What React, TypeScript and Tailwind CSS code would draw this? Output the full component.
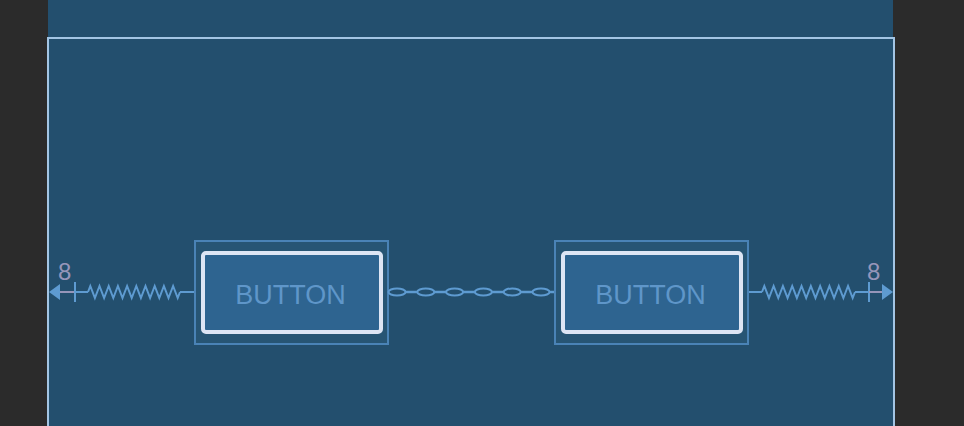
const LINE = '#5e9bd1';
const MUTED = '#9696ba';

function zigzag(x0: number, x1: number, teeth: number, y: number) {
  const step = (x1 - x0) / teeth;
  let d = `M${x0} ${y}`;
  for (let i = 0; i < teeth; i++) {
    const s = x0 + step * i;
    d += ` L${s + step * 0.25} ${y - 6} L${s + step * 0.75} ${y + 6} L${s + step} ${y}`;
  }
  return d;
}

function LeftConstraint() {
  return (
    <svg width="145" height="105" className="shrink-0 overflow-visible">
      <text x="9" y="40" fill={MUTED} fontSize="24" fontFamily="'Liberation Sans', Arial, sans-serif">8</text>
      <polygon points="0,52 11,44 11,60" fill={LINE} />
      <line x1="11" y1="52" x2="26" y2="52" stroke={MUTED} strokeWidth="2" />
      <line x1="26" y1="42" x2="26" y2="62" stroke={LINE} strokeWidth="2" />
      <line x1="26" y1="52" x2="39" y2="52" stroke={LINE} strokeWidth="2" />
      <path d={zigzag(39, 131, 10, 52)} fill="none" stroke={LINE} strokeWidth="2" />
      <line x1="131" y1="52" x2="145" y2="52" stroke={LINE} strokeWidth="2" />
    </svg>
  );
}

function RightConstraint() {
  return (
    <svg width="144" height="105" className="shrink-0 overflow-visible">
      <text x="118" y="40" fill={MUTED} fontSize="24" fontFamily="'Liberation Sans', Arial, sans-serif">8</text>
      <line x1="0" y1="52" x2="13" y2="52" stroke={LINE} strokeWidth="2" />
      <path d={zigzag(13, 106, 10, 52)} fill="none" stroke={LINE} strokeWidth="2" />
      <line x1="106" y1="52" x2="120" y2="52" stroke={LINE} strokeWidth="2" />
      <line x1="120" y1="42" x2="120" y2="62" stroke={LINE} strokeWidth="2" />
      <line x1="120" y1="52" x2="133" y2="52" stroke={MUTED} strokeWidth="2" />
      <polygon points="144,52 133,44 133,60" fill={LINE} />
    </svg>
  );
}

function Chain() {
  const centers = [0, 1, 2, 3, 4, 5].map((i) => 8 + i * 28.8);
  return (
    <svg width="165" height="105" className="shrink-0 overflow-visible">
      <line x1="0" y1="52" x2="165" y2="52" stroke={LINE} strokeWidth="2.5" />
      {centers.map((c) => (
        <ellipse key={c} cx={c} cy="52" rx="8.5" ry="3.5" fill="#234f6e" stroke={LINE} strokeWidth="2" />
      ))}
    </svg>
  );
}

function BlueprintButton() {
  return (
    <div className="shrink-0 w-[195px] h-[105px] border-2 border-[#4a83b6] bg-[#275574] pt-[9px] px-[5px]">
      <div className="w-[182px] h-[83px] rounded-[5px] border-4 border-[#dde5f4] bg-[#2e6490] flex items-center justify-center">
        <span className="text-[27px] leading-none text-[#5f96c9] font-['Liberation_Sans',Arial,sans-serif] pt-[5px] pr-[3px]">BUTTON</span>
      </div>
    </div>
  );
}

export default function App() {
  return (
    <div className="w-[964px] h-[426px] bg-[#2b2b2b] overflow-hidden flex">
      <div className="ml-[47px] w-[848px] flex flex-col">
        <div className="ml-[1px] w-[845px] h-[37px] shrink-0 bg-[#234f6e]" />
        <div className="flex-1 border-2 border-b-0 border-[#a3c5e4] bg-[#234f6e]">
          <div className="mt-[201px] flex items-center">
            <LeftConstraint />
            <BlueprintButton />
            <Chain />
            <BlueprintButton />
            <RightConstraint />
          </div>
        </div>
      </div>
    </div>
  );
}
